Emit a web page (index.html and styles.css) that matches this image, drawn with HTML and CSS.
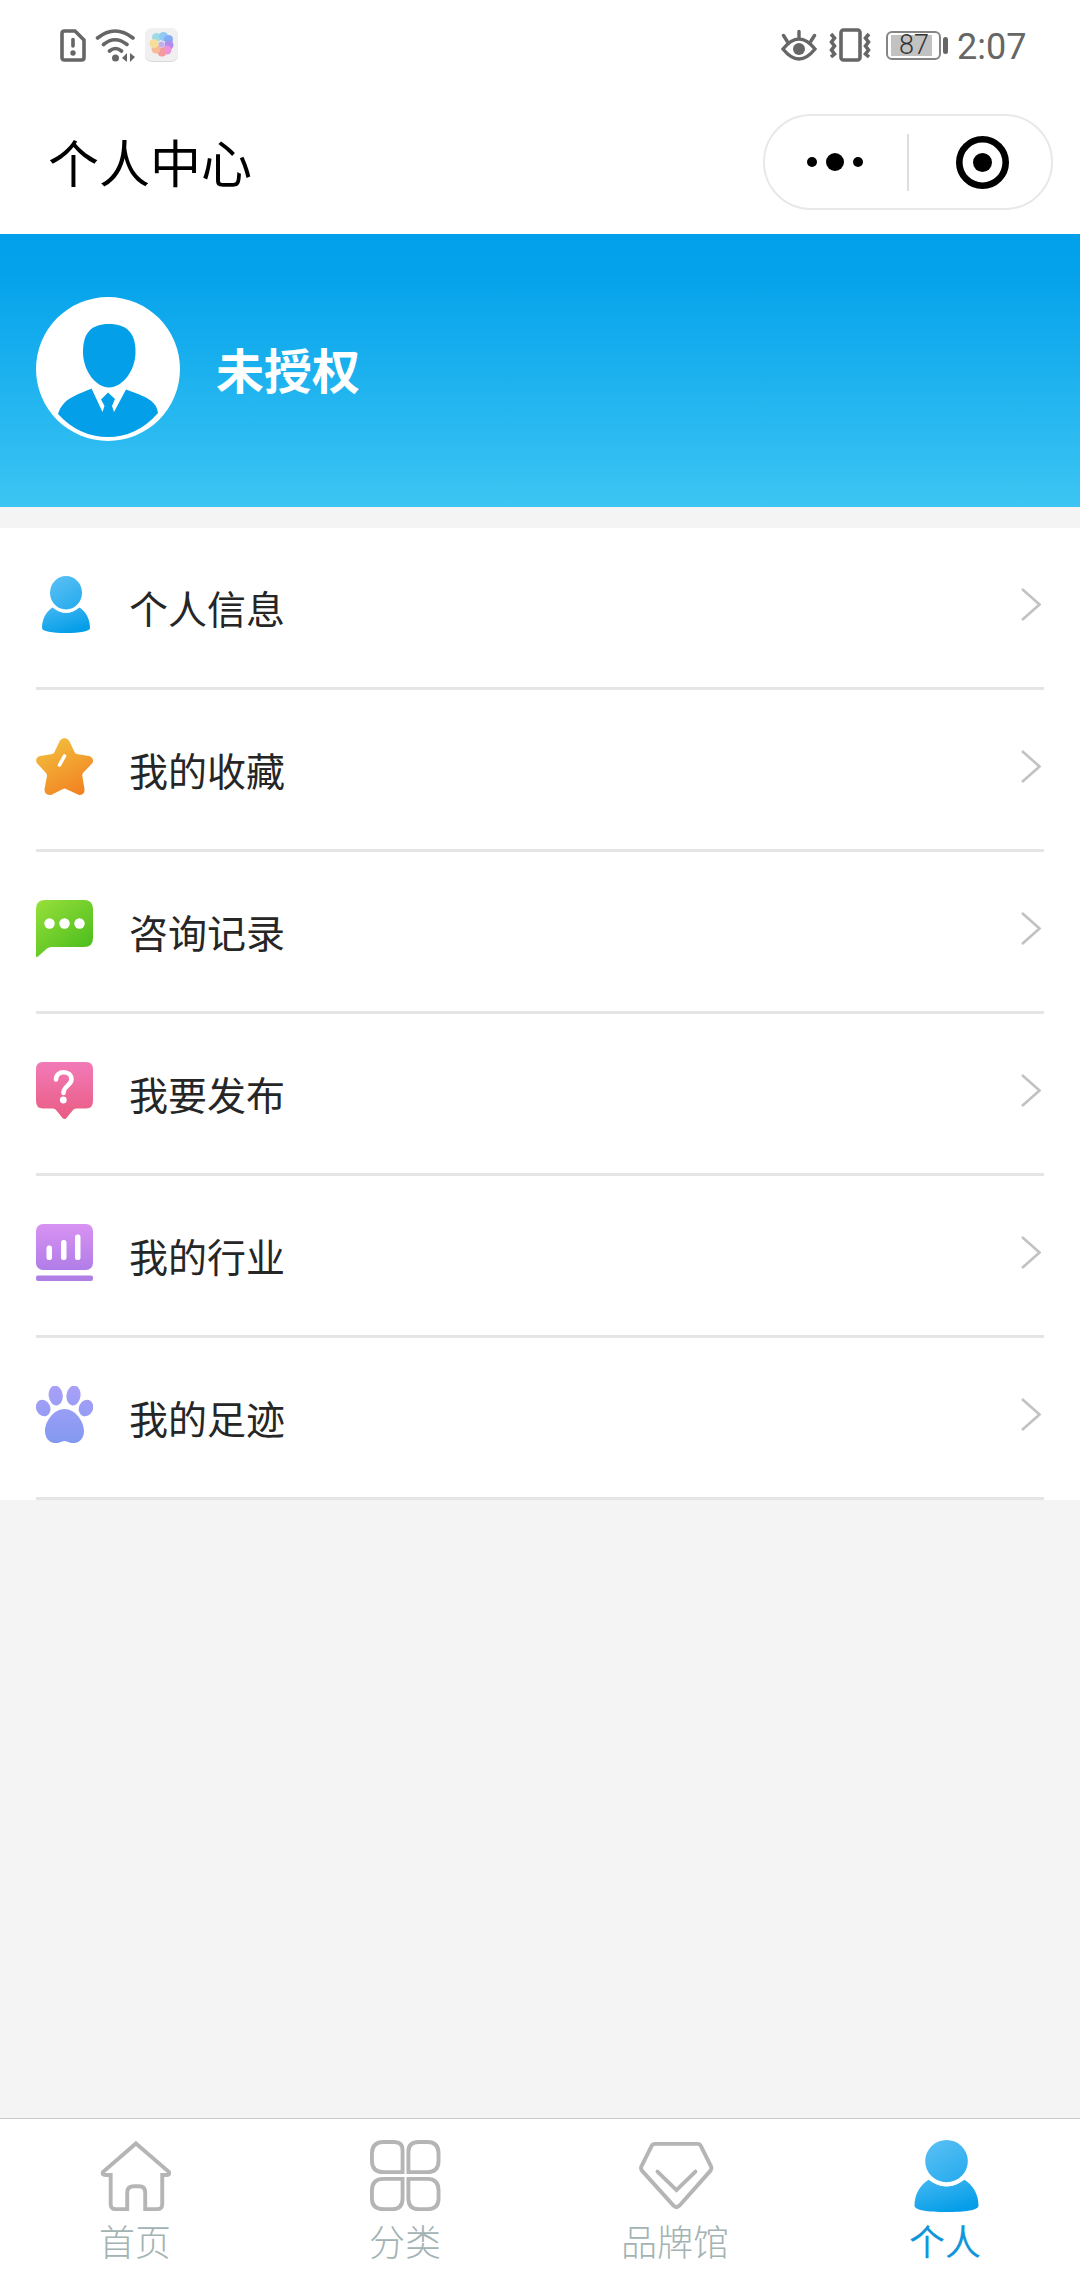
FILE: index.html
```html
<!DOCTYPE html>
<html lang="zh-CN">
<head>
<meta charset="utf-8">
<title>个人中心</title>
<link rel="stylesheet" href="styles.css">
</head>
<body>
<svg class="defs" width="0" height="0" aria-hidden="true">
  <defs>
    <linearGradient id="blue" x1="0" y1="0" x2="0.6" y2="1"><stop offset="0" stop-color="#45b8f2"/><stop offset="1" stop-color="#039de8"/></linearGradient>
    <linearGradient id="orange" x1="0.2" y1="0" x2="0.7" y2="1"><stop offset="0" stop-color="#f2c03e"/><stop offset="1" stop-color="#f28322"/></linearGradient>
    <linearGradient id="green" x1="0" y1="0" x2="0.8" y2="1"><stop offset="0" stop-color="#98e03a"/><stop offset="1" stop-color="#4bbd1d"/></linearGradient>
    <linearGradient id="pink" x1="0" y1="0" x2="0" y2="1"><stop offset="0" stop-color="#f27ab8"/><stop offset="1" stop-color="#e95c82"/></linearGradient>
    <linearGradient id="purple" x1="0" y1="0" x2="0" y2="1"><stop offset="0" stop-color="#d892f2"/><stop offset="1" stop-color="#b07de8"/></linearGradient>
    <linearGradient id="violet" gradientUnits="userSpaceOnUse" x1="0" y1="0" x2="0" y2="57"><stop offset="0" stop-color="#aaa0f8"/><stop offset="1" stop-color="#8299f0"/></linearGradient>
    <symbol id="chevron" viewBox="0 0 20 33"><path d="M1 1 18.500 16.500 1 32" fill="none" stroke="#c2c2c2" stroke-width="2.600"/></symbol>
    <symbol id="person" viewBox="0 0 57 57">
      <g fill="url(#blue)"><path d="M16.500 31.500C10 36 6 43 6 52C6 55.500 16 57 30 57S54 55.500 54 52C54 43 50 36 43.500 31.500Q30 42 16.500 31.500Z"/></g>
      <ellipse cx="30" cy="16.700" rx="18.500" ry="20" fill="#fff"/>
      <ellipse cx="30" cy="16.700" rx="16" ry="16.700" fill="url(#head)"/>
    </symbol>
    <linearGradient id="head" x1="0" y1="0" x2="0.6" y2="1"><stop offset="0" stop-color="#5dc1f5"/><stop offset="1" stop-color="#2badee"/></linearGradient>
  </defs>
</svg>

<header class="top">
  <div class="status">
    <div class="status-group">
      <svg width="26" height="33" viewBox="0 0 26 33" fill="none" stroke="#666" stroke-width="3.600"><path d="M4.500 2H15L24 11V28.500Q24 31 21.500 31H4.500Q2 31 2 28.500V4.500Q2 2 4.500 2Z"/><path d="M13 10.500V17" stroke-linecap="round"/><circle cx="13" cy="24" r="2.700" fill="#666" stroke="none"/></svg>
      <svg class="wifi" width="41" height="33" viewBox="0 0 41 33" fill="none" stroke="#666" stroke-width="3.600" stroke-linecap="round"><path d="M2.500 9Q20 -5 38 9M8.500 15.500Q20 6 32 15.500M14.500 22Q20.500 17 26.500 22"/><circle cx="20.500" cy="29" r="3.500" fill="#666" stroke="none"/><path d="M32 24V33L27 29ZM35 24V33L40 28Z" fill="#666" stroke="none"/></svg>
      <svg width="33" height="34" viewBox="0 0 33 34"><rect y="1" width="33" height="33" rx="7" fill="#d9d9d9"/><rect width="33" height="33" rx="7" fill="#f0f0f0"/><g opacity=".85"><circle cx="11.500" cy="9.500" r="4.500" fill="#8fd8e8"/><circle cx="18.500" cy="8.500" r="4.500" fill="#7fc4f6"/><circle cx="23.500" cy="11.500" r="4.500" fill="#72a0f4"/><circle cx="24" cy="17" r="4.500" fill="#a47bf0"/><circle cx="22" cy="22" r="4.500" fill="#ed83dc"/><circle cx="17" cy="24" r="4.500" fill="#f48b91"/><circle cx="11" cy="21" r="4.500" fill="#f8b388"/><circle cx="9" cy="15.500" r="4.500" fill="#f8dc8a"/><circle cx="16.500" cy="16.500" r="3" fill="#b9a5e8"/></g></svg>
    </div>
    <div class="status-group">
      <svg width="36" height="33" viewBox="0 0 36 33" fill="none" stroke="#666" stroke-width="3.400" stroke-linecap="round"><path d="M2 20Q18 0 34 20Q18 40 2 20ZM18 2.500V9M2.500 6.500 6 12M33.500 6.500 30 12"/><circle cx="18" cy="20" r="6" fill="#666" stroke="none"/></svg>
      <svg class="vibrate" width="42" height="34" viewBox="0 0 42 34" fill="none" stroke="#666" stroke-width="3.600"><rect x="12" y="2" width="19" height="30" rx="2.500"/><path d="M2 6 5.500 10 2.500 14 5.500 18 2.500 22 5.500 26 2 29M40 6 36.500 10 39.500 14 36.500 18 39.500 22 36.500 26 40 29" stroke-width="3.600"/></svg>
      <div class="battery"><div class="battery-cell"><div class="battery-level">87</div></div><div class="battery-cap"></div></div>
      <span class="clock">2:07</span>
    </div>
  </div>
  <div class="nav">
    <h1 class="title">个人中心</h1>
    <div class="capsule">
      <svg class="dots" width="56" height="18" viewBox="0 0 56 18"><circle cx="5" cy="9" r="5"/><circle cx="28" cy="9" r="9"/><circle cx="51" cy="9" r="5"/></svg>
      <div class="capsule-line"></div>
      <svg class="target" width="53" height="53" viewBox="0 0 53 53"><circle cx="26.500" cy="26.500" r="23.200" fill="none" stroke="#000" stroke-width="6.600"/><circle cx="26.500" cy="26.500" r="9.500"/></svg>
    </div>
  </div>
</header>

<section class="hero">
  <svg width="144" height="144" viewBox="0 0 144 144"><circle cx="72" cy="72" r="72" fill="#fff"/><g fill="#039fe9"><path d="M73 27C91 27 99.500 36 99.500 55C99.500 74 86 90.500 73 90.500S47 74 47 55C47 36 55 27 73 27Z"/><path d="M55.500 91.500 66.500 115 68.500 109 65 102.500 72 95.500 79 102 76 109 78 115 90 92.500C104 98 121 102 122 116Q101 140 72 140Q43 140 22 117C27 101 41 98 55.500 91.500Z"/></g></svg>
  <span class="name">未授权</span>
</section>

<main class="menu">
  <a class="row"><svg class="icon"><use href="#person"/></svg><span class="label">个人信息</span><svg class="chevron"><use href="#chevron"/></svg></a>
  <a class="row"><svg class="icon" viewBox="0 0 57 57"><path d="M24 2.500Q28.500 -2.500 33 2.500L39 15Q40 16 42 16.300L53 18Q58.500 20 56.500 25L47 35Q46 36 46.300 38L48.500 51Q49 57 43 57L30 51Q28.500 50 27 51L15 57Q8 57 8.500 51L11 38Q11 36 10 35L.8 25Q-1.500 20 4 18L15 16.300Q17 16 18 15Z" fill="url(#orange)"/><path d="M23.500 27 28.500 18" stroke="#fff" stroke-width="3.600" stroke-linecap="round"/></svg><span class="label">我的收藏</span><svg class="chevron"><use href="#chevron"/></svg></a>
  <a class="row"><svg class="icon" viewBox="0 0 57 57"><path d="M9 0H48Q57 0 57 9V38Q57 47 48 47H15Q13 47 11 48.500L2 56.500Q0 57 0 57V9Q0 0 9 0Z" fill="url(#green)"/><g fill="#fff"><circle cx="13.500" cy="23.500" r="5.200"/><circle cx="28.500" cy="23.500" r="5.200"/><circle cx="43.500" cy="23.500" r="5.200"/></g></svg><span class="label">咨询记录</span><svg class="chevron"><use href="#chevron"/></svg></a>
  <a class="row"><svg class="icon" viewBox="0 0 57 57"><path d="M7 0H50Q57 0 57 7V39Q57 46.500 50 46.500H40Q38 46.500 37 48L30.500 56Q28.500 58 26.500 56L20 48Q19 46.500 17 46.500H7Q0 46.500 0 39V7Q0 0 7 0Z" fill="url(#pink)"/><path d="M20 17.500C20 7.500 35.500 8 35.500 17.500C35.500 23 27.500 24 27.500 31" fill="none" stroke="#fff" stroke-width="4.600" stroke-linecap="round"/><circle cx="27.300" cy="38" r="3.400" fill="#fff"/></svg><span class="label">我要发布</span><svg class="chevron"><use href="#chevron"/></svg></a>
  <a class="row"><svg class="icon" viewBox="0 0 57 57"><rect width="57" height="46" rx="7" fill="url(#purple)"/><rect y="51.500" width="57" height="5.500" rx="2" fill="#b07fe6"/><g fill="#fff"><rect x="10.500" y="21.500" width="5.500" height="14.500" rx="2.500"/><rect x="25" y="16" width="5.500" height="20" rx="2.500"/><rect x="39" y="10.500" width="5.500" height="25.500" rx="2.500"/></g></svg><span class="label">我的行业</span><svg class="chevron"><use href="#chevron"/></svg></a>
  <a class="row"><svg class="icon" viewBox="0 0 57 57" fill="url(#violet)"><path d="M28.500 23C39 23 48 35 48 45C48 54 41 59 33.500 56.500Q28.500 53.500 23.500 56.500C16 59 9 54 9 45C9 35 18 23 28.500 23Z"/><ellipse cx="19.700" cy="9.500" rx="7" ry="10" transform="rotate(-8 19.700 9.500)"/><ellipse cx="37.500" cy="9.500" rx="7" ry="10" transform="rotate(8 37.500 9.500)"/><ellipse cx="7.200" cy="22" rx="7" ry="8.500" transform="rotate(-25 7.200 22)"/><ellipse cx="50" cy="22" rx="7" ry="8.500" transform="rotate(25 50 22)"/></svg><span class="label">我的足迹</span><svg class="chevron"><use href="#chevron"/></svg></a>
</main>

<nav class="tabs">
  <a class="tab"><svg viewBox="0 0 74 74"><path d="M38 3.500 72 33Q73 36 69 36H65V66Q65 71 60 71H47.500V54Q47.500 47.500 41 47.500H36Q29 47.500 29 54V71H17Q12 71 12 66V36H6.500Q3 36 4 33Z"/></svg><span>首页</span></a>
  <a class="tab"><svg viewBox="0 0 74 74"><path d="M15 2H26Q34.500 2 34.500 10.500V33H15Q3 33 3 21V14Q3 2 15 2ZM51 2H60Q71.500 2 71.500 14V21Q71.500 33 60 33H40.500V12Q40.500 2 51 2ZM15 40H34.500V60Q34.500 71 24 71H15Q3 71 3 60V52Q3 40 15 40ZM40.500 40H60Q71.500 40 71.500 52V60Q71.500 71 60 71H51Q40.500 71 40.500 60Z"/></svg><span>分类</span></a>
  <a class="tab"><svg viewBox="0 0 74 74"><path d="M16.500 4H60.500Q62.500 4 63.500 6L74 27Q75 29.500 73.500 31.500L41.500 67.500Q38.500 70.500 35.500 67.500L3 31.500Q1.500 29.500 2.500 27L13 6Q14 4 16.500 4ZM19 32.500 38.500 51.500 58 32.500" stroke-linecap="round"/></svg><span>品牌馆</span></a>
  <a class="tab active"><svg viewBox="0 0 57 57"><use href="#person" width="57" height="57" transform="translate(-1.950 0) scale(1.055 1)"/></svg><span>个人</span></a>
</nav>
</body>
</html>
```
FILE: styles.css
```css
* { box-sizing: border-box; }

body {
  margin: 0;
  width: 1080px;
  height: 2280px;
  display: flex;
  flex-direction: column;
  background: #f4f4f4;
  font-family: "Noto Sans CJK SC", sans-serif;
  color: #262626;
}

svg { display: block; flex: none; }
.defs { position: absolute; }

.top { height: 234px; background: #fff; }

.status {
  height: 90px;
  padding: 0 54px 0 60px;
  display: flex;
  justify-content: space-between;
  align-items: center;
}
.status-group { display: flex; align-items: center; }
.wifi { margin: 0 9px; }
.vibrate { margin: 0 15px 0 12px; }

.battery { display: flex; align-items: center; gap: 2px; }
.battery-cell {
  width: 55px;
  height: 29px;
  padding: 2px;
  border: 2px solid #858585;
  border-radius: 6px;
}
.battery-level {
  width: 41px;
  height: 21px;
  margin-left: 1px;
  background: #c2c2c2;
  font: 300 27px/21px Roboto, sans-serif;
  color: #333;
  text-align: center;
  text-indent: 5px;
  white-space: nowrap;
}
.battery-cap { width: 5px; height: 17px; border-radius: 3px; background: #666; }

.clock {
  width: 69px;
  margin: 3px 0 0 9px;
  font: 400 36px/44px Roboto, sans-serif;
  color: #666;
  white-space: nowrap;
}

.nav {
  height: 144px;
  padding: 0 27px 0 48px;
  display: flex;
  justify-content: space-between;
  align-items: center;
}
.title {
  margin: -2px 0 0;
  font-size: 51px;
  font-weight: 400;
  line-height: 72px;
  color: #000;
}
.capsule {
  width: 290px;
  height: 96px;
  padding: 0 42px;
  border: 2px solid #e8e8e8;
  border-radius: 48px;
  display: flex;
  align-items: center;
}
.capsule-line { width: 2px; height: 57px; margin: 0 47px 0 44px; background: #dedede; }

.hero {
  height: 273px;
  padding: 63px 36px 0;
  display: flex;
  background: linear-gradient(#02a0ea, #04a2eb 14%, #3cc5f3);
}
.name {
  margin: 35px 0 0 36px;
  font-size: 48px;
  font-weight: 700;
  line-height: 72px;
  color: #fff;
}

.menu { margin-top: 21px; padding: 0 36px; background: #fff; }
.row {
  height: 162px;
  padding: 0 3px 6px 0;
  border-bottom: 3px solid #e5e5e5;
  display: flex;
  align-items: center;
}
.icon { width: 57px; height: 57px; }
.label {
  flex: 1;
  margin: 5px 0 0 36px;
  font-size: 39px;
  font-weight: 400;
  line-height: 58px;
}
.chevron { width: 20px; height: 33px; }

.tabs {
  height: 162px;
  margin-top: auto;
  border-top: 1px solid #c8c8c8;
  background: #fff;
  display: grid;
  grid-template-columns: repeat(4, 1fr);
}
.tab {
  padding-top: 21px;
  display: flex;
  flex-direction: column;
  align-items: center;
  font-size: 36px;
  font-weight: 300;
  line-height: 50px;
  color: #a3b3b3;
}
.tab svg {
  width: 72px;
  height: 72px;
  fill: none;
  stroke: #b5b5b5;
  stroke-width: 4px;
  overflow: visible;
}
.tab span { margin-top: 3px; }
.tab.active { color: #1296db; }
.tab.active span { font-weight: 400; }
.tab.active svg { stroke: none; }
```
